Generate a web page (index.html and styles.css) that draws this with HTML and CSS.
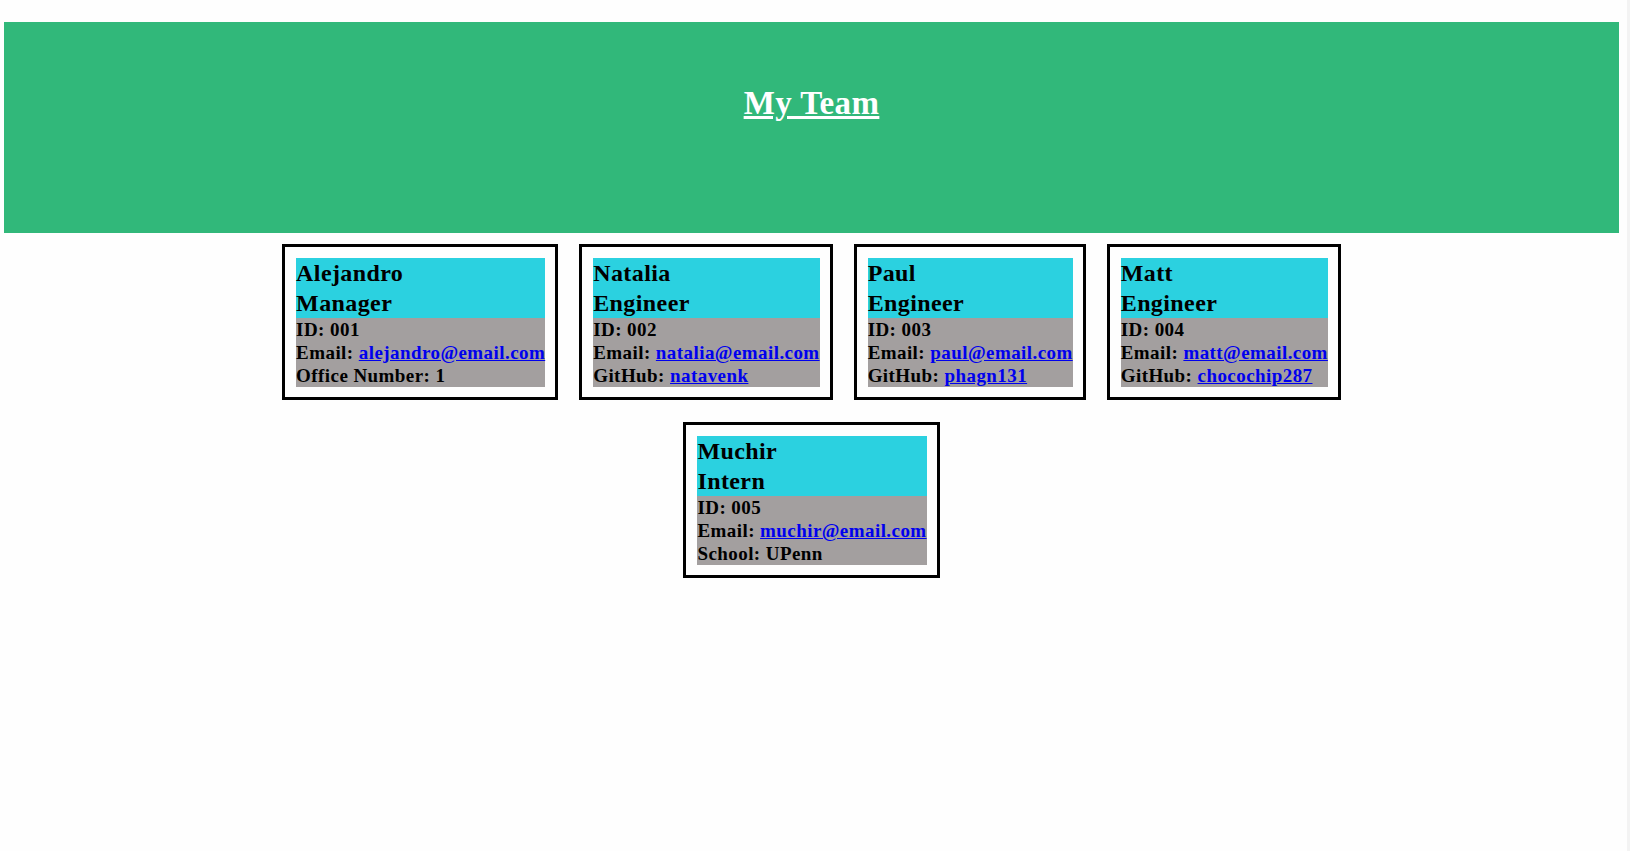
FILE: index.html
```html
<!DOCTYPE html>
<html lang="en">
<head>
    <meta charset="UTF-8">
    <meta name="viewport" content="width=device-width, initial-scale=1.0">
    <title>My Team</title>
    <link rel="stylesheet" href="styles.css">
</head>
<body>
    <!-- Banner -->
    <header class="banner">
        <h1>My Team</h1>
    </header>

    <!-- Team cards -->
    <main class="team">
        <div class="card">
            <div class="card-head">
                <h2>Alejandro</h2>
                <h2>Manager</h2>
            </div>
            <div class="card-body">
                <p>ID: 001</p>
                <p>Email: <a href="mailto:alejandro@email.com">alejandro@email.com</a></p>
                <p>Office Number: 1</p>
            </div>
        </div>

        <div class="card">
            <div class="card-head">
                <h2>Natalia</h2>
                <h2>Engineer</h2>
            </div>
            <div class="card-body">
                <p>ID: 002</p>
                <p>Email: <a href="mailto:natalia@email.com">natalia@email.com</a></p>
                <p>GitHub: <a href="#">natavenk</a></p>
            </div>
        </div>

        <div class="card">
            <div class="card-head">
                <h2>Paul</h2>
                <h2>Engineer</h2>
            </div>
            <div class="card-body">
                <p>ID: 003</p>
                <p>Email: <a href="mailto:paul@email.com">paul@email.com</a></p>
                <p>GitHub: <a href="#">phagn131</a></p>
            </div>
        </div>

        <div class="card">
            <div class="card-head">
                <h2>Matt</h2>
                <h2>Engineer</h2>
            </div>
            <div class="card-body">
                <p>ID: 004</p>
                <p>Email: <a href="mailto:matt@email.com">matt@email.com</a></p>
                <p>GitHub: <a href="#">chocochip287</a></p>
            </div>
        </div>

        <div class="card">
            <div class="card-head">
                <h2>Muchir</h2>
                <h2>Intern</h2>
            </div>
            <div class="card-body">
                <p>ID: 005</p>
                <p>Email: <a href="mailto:muchir@email.com">muchir@email.com</a></p>
                <p>School: UPenn</p>
            </div>
        </div>
    </main>
</body>
</html>
```

FILE: styles.css
```css
html {
    min-height: 100%;
    border-right: 3px solid #f3f3f3;
    background-color: #fefefe;
}
body {
    font-family: "Liberation Serif", "Times New Roman", serif;
    margin: 22px 8px 0 4px;
}
.banner {
    background-color: #31b87a;
    padding: 62px 0 111px;
    text-align: center;
}
.banner h1 {
    margin: 0;
    font-size: 33px;
    line-height: 38px;
    letter-spacing: 0.4px;
    color: #fff;
    text-decoration: underline;
}
.team {
    max-width: 1140px;
    margin: 0 auto;
    display: flex;
    flex-wrap: wrap;
    justify-content: center;
    gap: 22px 21px;
    padding-top: 11px;
}
.card {
    border: 3px solid #000;
    padding: 11px 10px 10px 11px;
}
.card-head {
    background-color: #2bd1e0;
}
.card-head h2 {
    margin: 0;
    font-size: 24px;
    line-height: 30px;
    letter-spacing: 0.4px;
}
.card-body {
    background-color: #a39f9f;
}
.card-body p {
    margin: 0;
    font-size: 19px;
    line-height: 23px;
    letter-spacing: 0.43px;
    font-weight: bold;
}
.card-body a {
    color: #0000ee;
}
```
